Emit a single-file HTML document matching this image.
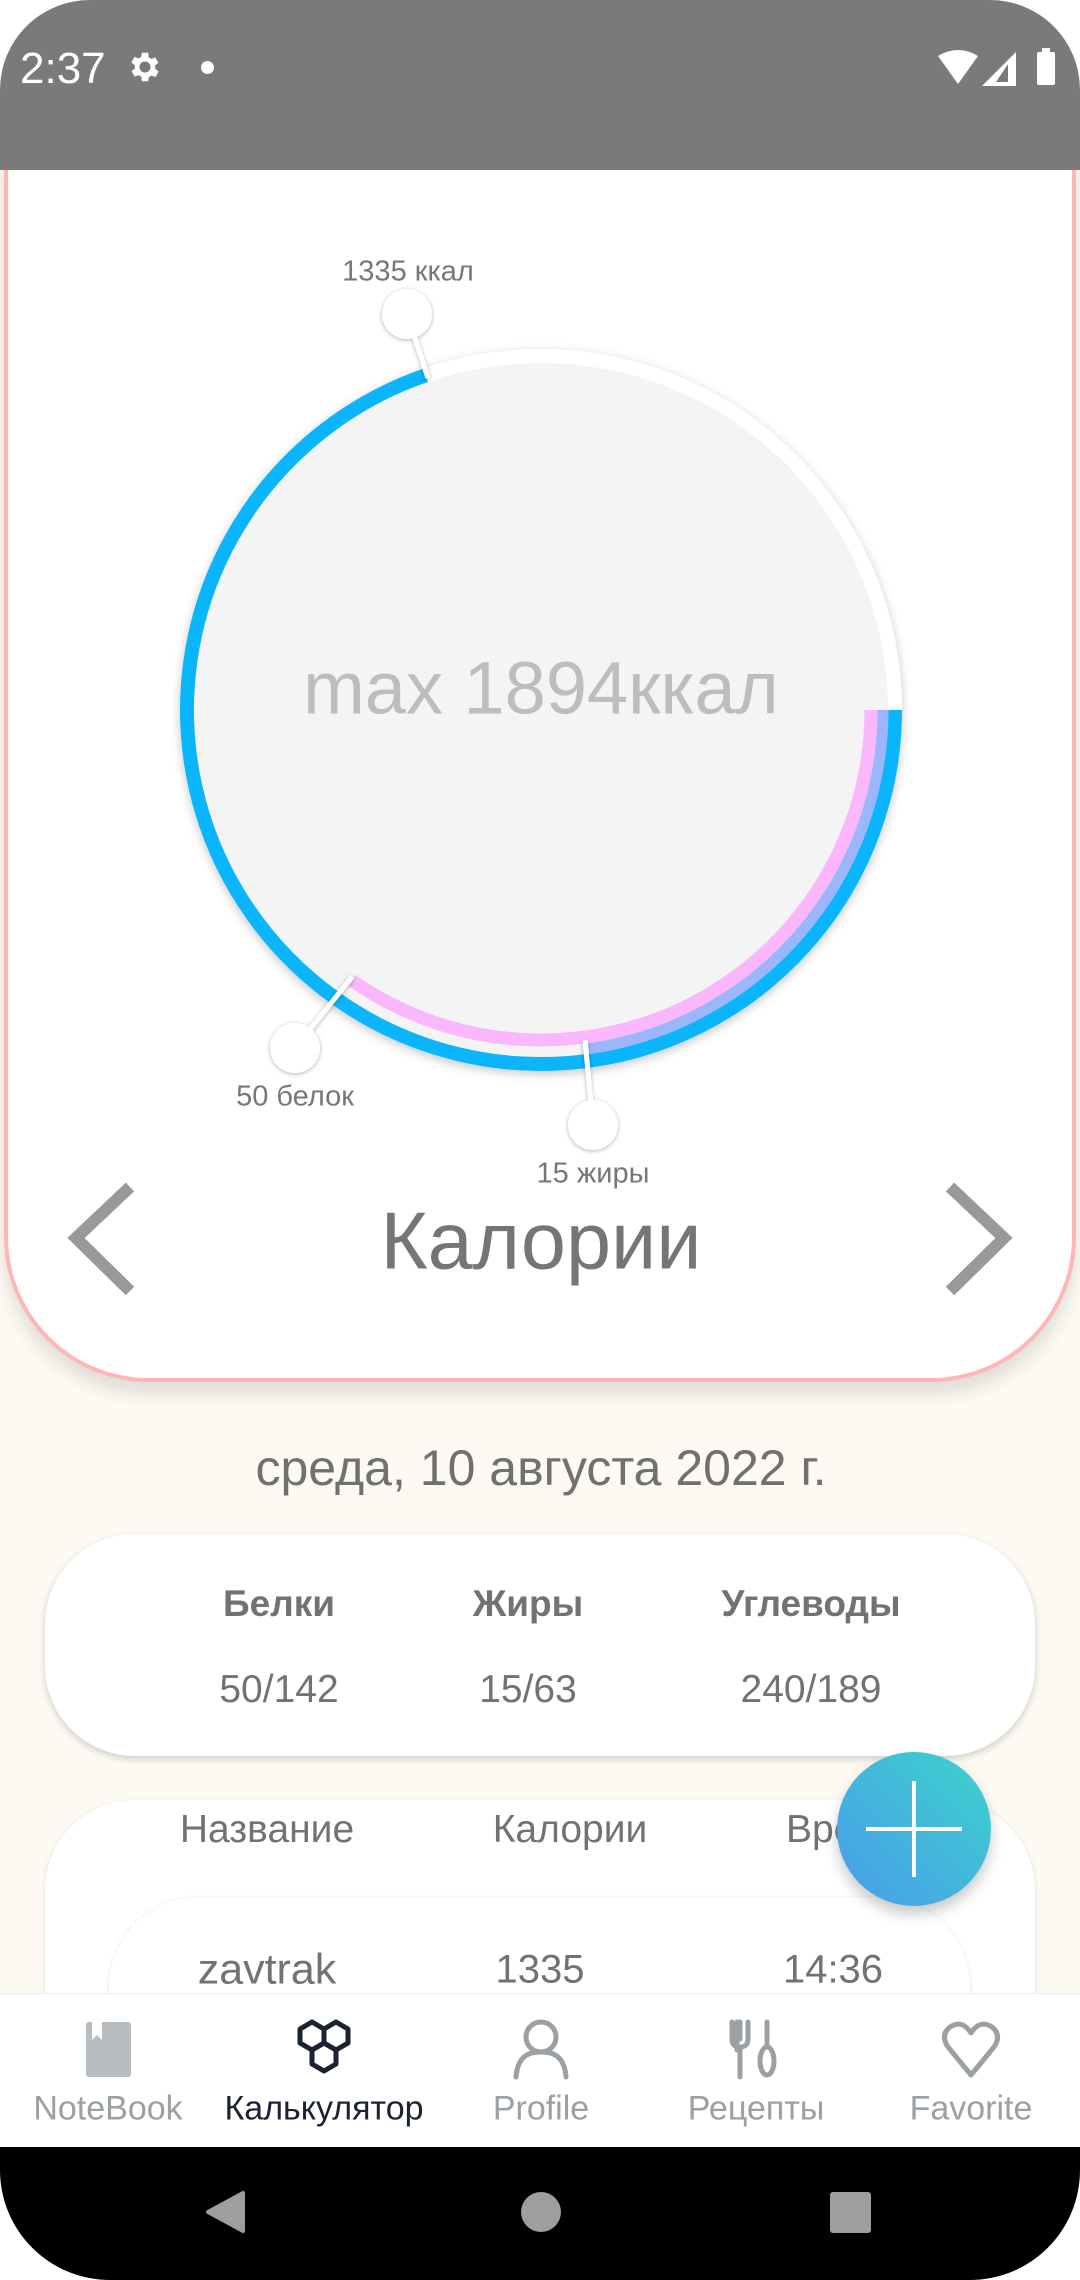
<!DOCTYPE html>
<html><head><meta charset="utf-8">
<style>
html,body{margin:0;padding:0;}
body{width:1080px;height:2280px;position:relative;overflow:hidden;background:#fff;font-family:"Liberation Sans","Noto Sans CJK SC",sans-serif;}
.abs{position:absolute;}
.c{position:absolute;transform:translate(-50%,-50%);white-space:nowrap;}
</style></head><body>
<div class="abs" style="left:0;top:170px;width:1080px;height:1980px;background:#fdfaf3;"></div>

<!-- main card -->
<div class="abs" style="left:4px;top:150px;width:1064px;height:1228px;background:#fff;border:4px solid #ffb6b6;border-top:none;border-radius:0 0 145px 145px;box-shadow:0 12px 18px rgba(0,0,0,0.12);"></div>

<!-- status bar -->
<div class="abs" style="left:0;top:0;width:1080px;height:170px;background:#7a7a7a;border-radius:90px 90px 0 0;"></div>
<div class="abs" style="left:20px;top:44px;color:#fff;font-size:44px;">2:37</div>
<svg class="abs" style="left:126px;top:48px" width="38" height="38" viewBox="0 0 24 24"><path fill="#fff" d="M19.4 13a7.5 7.5 0 0 0 0-2l2.1-1.6-2-3.5-2.5 1a7 7 0 0 0-1.7-1L15 3h-4l-.4 2.6a7 7 0 0 0-1.7 1l-2.5-1-2 3.5L6.6 11a7.5 7.5 0 0 0 0 2l-2.1 1.6 2 3.5 2.5-1a7 7 0 0 0 1.7 1L11 21h4l.4-2.6a7 7 0 0 0 1.7-1l2.5 1 2-3.5zM13 15.5a3.5 3.5 0 1 1 0-7 3.5 3.5 0 0 1 0 7z" transform="translate(-1 0)"/></svg>
<div class="abs" style="left:201px;top:61px;width:13px;height:13px;border-radius:50%;background:#fff;"></div>
<svg class="abs" style="left:938px;top:50px" width="40" height="36"><path d="M0 6 Q20 -6 40 6 L20 34 Z" fill="#fff"/></svg>
<svg class="abs" style="left:982px;top:52px" width="34" height="34"><path d="M34 0 V34 H0 Z" fill="#fff"/><path d="M26 12 V30 H14 Z" fill="#7a7a7a"/></svg>
<div class="abs" style="left:1037px;top:52px;width:18px;height:33px;background:#fff;border-radius:2px;"></div>
<div class="abs" style="left:1042px;top:48px;width:8px;height:5px;background:#fff;"></div>

<svg class="abs" style="left:0;top:0" width="1080" height="1400">
<defs><filter id="sh" x="-20%" y="-20%" width="140%" height="140%"><feDropShadow dx="0" dy="3" stdDeviation="5" flood-color="#000" flood-opacity="0.22"/></filter>
<filter id="sh2" x="-50%" y="-50%" width="200%" height="200%"><feDropShadow dx="0" dy="1" stdDeviation="2" flood-color="#000" flood-opacity="0.3"/></filter></defs>
<circle cx="541" cy="710" r="361" fill="#fff" filter="url(#sh)"/>
<circle cx="541" cy="710" r="347" fill="#f4f4f4"/>
<path d="M895 710 A354 354 0 1 1 425.7 375.3" fill="none" stroke="#0bb5fc" stroke-width="14"/>
<path d="M883 710 A342 342 0 0 1 588.6 1048.7" fill="none" stroke="#9bb6fb" stroke-width="11"/>
<path d="M871 710 A330 330 0 0 1 351.7 980.3" fill="none" stroke="#fbb7fb" stroke-width="13"/>
<g filter="url(#sh2)">
<line x1="407" y1="314" x2="428" y2="378" stroke="#fff" stroke-width="5"/>
<line x1="295" y1="1048" x2="352" y2="977" stroke="#fff" stroke-width="5"/>
<line x1="593" y1="1125" x2="585" y2="1040" stroke="#fff" stroke-width="5"/>
<circle cx="407" cy="314" r="25" fill="#fff"/>
<circle cx="295" cy="1048" r="25" fill="#fff"/>
<circle cx="593" cy="1125" r="25" fill="#fff"/>
</g>
<polyline points="130,1187 76,1238 130,1291" fill="none" stroke="#999" stroke-width="12"/>
<polyline points="950,1187 1004,1238 950,1291" fill="none" stroke="#999" stroke-width="12"/>
</svg>

<div class="c" style="left:541px;top:688px;font-size:74px;color:#bdbdbd;">max 1894ккал</div>
<div class="c" style="left:408px;top:272px;font-size:29px;color:#777;">1335 ккал</div>
<div class="c" style="left:295px;top:1097px;font-size:29px;color:#777;">50 белок</div>
<div class="c" style="left:593px;top:1174px;font-size:29px;color:#777;">15 жиры</div>
<div class="c" style="left:541px;top:1242px;font-size:81px;color:#757575;">Калории</div>

<div class="c" style="left:541px;top:1468px;font-size:50px;color:#707070;">среда, 10 августа 2022 г.</div>

<div class="abs" style="left:45px;top:1534px;width:990px;height:222px;background:#fff;border-radius:90px;box-shadow:0 3px 8px rgba(0,0,0,0.18);"></div>
<div class="c" style="left:279px;top:1604px;font-size:37px;font-weight:bold;color:#727272;">Белки</div>
<div class="c" style="left:528px;top:1604px;font-size:37px;font-weight:bold;color:#727272;">Жиры</div>
<div class="c" style="left:811px;top:1604px;font-size:37px;font-weight:bold;color:#727272;">Углеводы</div>
<div class="c" style="left:279px;top:1690px;font-size:39px;color:#727272;">50/142</div>
<div class="c" style="left:528px;top:1690px;font-size:39px;color:#727272;">15/63</div>
<div class="c" style="left:811px;top:1690px;font-size:39px;color:#727272;">240/189</div>

<div class="abs" style="left:45px;top:1800px;width:990px;height:330px;background:#fff;border-radius:90px;box-shadow:0 2px 6px rgba(0,0,0,0.12);"></div>
<div class="c" style="left:267px;top:1830px;font-size:39px;color:#727272;">Название</div>
<div class="c" style="left:570px;top:1830px;font-size:39px;color:#727272;">Калории</div>
<div class="abs" style="left:786px;top:1808px;font-size:39px;color:#727272;">Время</div>
<div class="abs" style="left:109px;top:1897px;width:861px;height:250px;background:#fff;border-radius:90px;box-shadow:0 1px 4px rgba(0,0,0,0.12);"></div>
<div class="c" style="left:267px;top:1970px;font-size:43px;color:#727272;">zavtrak</div>
<div class="c" style="left:540px;top:1970px;font-size:40px;color:#727272;">1335</div>
<div class="c" style="left:833px;top:1970px;font-size:40px;color:#727272;">14:36</div>

<div class="abs" style="left:837px;top:1752px;width:154px;height:154px;border-radius:50%;background:linear-gradient(225deg,#3cd3cc,#4a9bea);box-shadow:0 8px 14px rgba(0,0,0,0.22);"></div>
<div class="abs" style="left:866px;top:1827px;width:96px;height:4px;background:#fff;"></div>
<div class="abs" style="left:912px;top:1781px;width:4px;height:96px;background:#fff;"></div>

<div class="abs" style="left:0;top:1993px;width:1080px;height:154px;background:#fff;border-top:1px solid #eee;"></div>
<svg class="abs" style="left:0;top:2015px" width="1080" height="70">
<rect x="86" y="7" width="45" height="55" rx="3" fill="#b7bcc0"/>
<path d="M92 7 V25 L97 20 L102 25 V7" fill="#fff"/>
<g fill="none" stroke="#1b2232" stroke-width="5" stroke-linejoin="round">
<path d="M312 7 L324 14 L324 28 L312 35 L300 28 L300 14 Z"/>
<path d="M336 7 L348 14 L348 28 L336 35 L324 28 L324 14 Z"/>
<path d="M324 28 L336 35 L336 49 L324 56 L312 49 L312 35 Z"/>
</g>
<g fill="none" stroke="#9aa0a4" stroke-width="5" stroke-linecap="round">
<circle cx="541" cy="22" r="15"/>
<path d="M516 62 Q518 36 541 37 Q564 36 566 62"/>
<path d="M737 7 V35 M732 7 V24 Q732 32 740 32 Q748 32 748 24 V7 M740 7 V24 M740 32 V62"/>
<path d="M767 7 V32"/><ellipse cx="767" cy="46" rx="7" ry="14"/>
<path d="M971 60 L948 32 Q940 20 950 12 Q962 4 971 18 Q980 4 992 12 Q1002 20 994 32 Z" stroke-linejoin="round"/>
</g>
</svg>
<div class="c" style="left:108px;top:2109px;font-size:34px;color:#9aa0a4;">NoteBook</div>
<div class="c" style="left:324px;top:2109px;font-size:34px;color:#1b2232;">Калькулятор</div>
<div class="c" style="left:541px;top:2109px;font-size:34px;color:#9aa0a4;">Profile</div>
<div class="c" style="left:756px;top:2109px;font-size:34px;color:#9aa0a4;">Рецепты</div>
<div class="c" style="left:971px;top:2109px;font-size:34px;color:#9aa0a4;">Favorite</div>

<div class="abs" style="left:0;top:2147px;width:1080px;height:133px;background:#000;border-radius:0 0 110px 110px;"></div>
<svg class="abs" style="left:0;top:2147px" width="1080" height="133">
<path d="M243 46 L208 65 L243 84 Z" fill="#9e9e9e" stroke="#9e9e9e" stroke-width="4" stroke-linejoin="round"/>
<circle cx="541" cy="65" r="20" fill="#9e9e9e"/>
<rect x="830" y="45" width="41" height="41" rx="3" fill="#9e9e9e"/>
</svg>
</body></html>
